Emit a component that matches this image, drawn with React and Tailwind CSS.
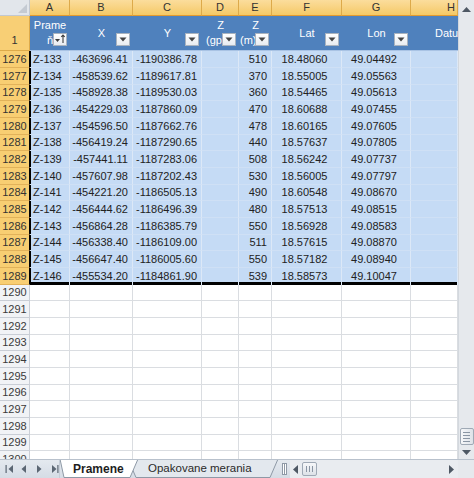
import React from 'react'

const cols = [
    { k: 'A', w: 'w-[40px]' },
    { k: 'B', w: 'w-[63px]' },
    { k: 'C', w: 'w-[69px]' },
    { k: 'D', w: 'w-[37px]' },
    { k: 'E', w: 'w-[33px]' },
    { k: 'F', w: 'w-[70px]' },
    { k: 'G', w: 'w-[69px]' },
    { k: 'H', w: 'w-[47px]' },
]

const rows = [
    ['Z-133', '-463696.41', '-1190386.78', '510', '18.48060', '49.04492'],
    ['Z-134', '-458539.62', '-1189617.81', '370', '18.55005', '49.05563'],
    ['Z-135', '-458928.38', '-1189530.03', '360', '18.54465', '49.05613'],
    ['Z-136', '-454229.03', '-1187860.09', '470', '18.60688', '49.07455'],
    ['Z-137', '-454596.50', '-1187662.76', '478', '18.60165', '49.07605'],
    ['Z-138', '-456419.24', '-1187290.65', '440', '18.57637', '49.07805'],
    ['Z-139', '-457441.11', '-1187283.06', '508', '18.56242', '49.07737'],
    ['Z-140', '-457607.98', '-1187202.43', '530', '18.56005', '49.07797'],
    ['Z-141', '-454221.20', '-1186505.13', '490', '18.60548', '49.08670'],
    ['Z-142', '-456444.62', '-1186496.39', '480', '18.57513', '49.08515'],
    ['Z-143', '-456864.28', '-1186385.79', '550', '18.56928', '49.08583'],
    ['Z-144', '-456338.40', '-1186109.00', '511', '18.57615', '49.08870'],
    ['Z-145', '-456647.40', '-1186005.60', '550', '18.57182', '49.08940'],
    ['Z-146', '-455534.20', '-1184861.90', '539', '18.58573', '49.10047'],
]

const heights = ['h-[17px]', 'h-[17px]', 'h-[16px]']

const FilterBtn = ({ sort }) => (
    <div className="absolute right-[3px] bottom-[4px] w-[14px] h-[13px] bg-linear-to-b from-white to-[#E8ECF1] border border-[#A9B3BF] flex items-center justify-center">
        {sort ? (
            <svg width="12" height="11" viewBox="0 0 12 11">
                <path d="M1 5h5l-2.5 3z" fill="#3C3C3C" />
                <path d="M9 1v8M7.3 2.8L9 1l1.7 1.8" stroke="#3C3C3C" strokeWidth="1.1" fill="none" />
            </svg>
        ) : (
            <svg width="8" height="5" viewBox="0 0 8 5">
                <path d="M0.5 0.5h7l-3.5 4z" fill="#444" />
            </svg>
        )}
    </div>
)

const Arrow = ({ dir, bar }) => {
    const d = {
        left: 'M6 1v8L1.5 5z',
        right: 'M2 1v8l4.5-4z',
    }[dir]
    return (
        <svg width="9" height="10" viewBox="0 0 9 10">
            {bar === 'left' && <rect x="0.5" y="1" width="1.2" height="8" fill="#5B6673" />}
            <path d={bar === 'left' ? 'M8 1v8L3.5 5z' : d} fill="#5B6673" />
            {bar === 'right' && <rect x="7.3" y="1" width="1.2" height="8" fill="#5B6673" />}
        </svg>
    )
}

export default function App() {
    return (
        <div className="w-[474px] h-[478px] overflow-hidden bg-white font-['Liberation_Sans',Arial,sans-serif] text-[11px] text-[#222]">
            <div className="flex h-[459px]">
                {/* sheet */}
                <div className="w-[458px] h-full overflow-hidden flex flex-col">
                    {/* column letters */}
                    <div className="flex h-[16px] shrink-0">
                        <div className="relative w-[30px] bg-[#E2E6EB] border-r border-b border-[#C2C8D0]">
                            <svg className="absolute right-[2px] bottom-[2px]" width="9" height="9" viewBox="0 0 9 9">
                                <path d="M9 0v9H0z" fill="#C4CAD2" />
                            </svg>
                        </div>
                        {cols.map((c) => (
                            <div key={c.k} className={`${c.w} shrink-0 flex items-center justify-center bg-linear-to-b from-[#FBDD9C] to-[#F5C965] border-r border-r-[#DDAA4A] border-b border-b-[#E39A2E] text-[#333] text-[11px]`}>
                                {c.k === 'H' ? <span className="ml-auto pr-[2px]">H</span> : c.k}
                            </div>
                        ))}
                    </div>

                    {/* table header row */}
                    <div className="flex h-[35px] shrink-0">
                        <div className="w-[30px] shrink-0 flex items-end justify-center pb-[2px] bg-[#F8CF75] border-r border-r-[#DDAA4A] border-b border-b-[#DDAA4A] text-[#333]">1</div>
                        <div className="w-[40px] shrink-0 relative overflow-hidden bg-[#4F81BD] border-b border-[#A9C3E4] text-white flex flex-col items-center justify-center leading-[15px]">
                            <span>Prame</span>
                            <span>ň</span>
                            <FilterBtn sort />
                        </div>
                        <div className="w-[63px] shrink-0 relative bg-[#4F81BD] border-b border-[#A9C3E4] text-white flex items-center justify-center">
                            X
                            <FilterBtn />
                        </div>
                        <div className="w-[69px] shrink-0 relative bg-[#4F81BD] border-b border-[#A9C3E4] text-white flex items-center justify-center">
                            Y
                            <FilterBtn />
                        </div>
                        <div className="w-[37px] shrink-0 relative overflow-hidden bg-[#4F81BD] border-b border-[#A9C3E4] text-white flex flex-col justify-center leading-[15px]">
                            <span className="text-center">Z</span>
                            <span className="pl-[4px] whitespace-nowrap">(gps)</span>
                            <FilterBtn />
                        </div>
                        <div className="w-[33px] shrink-0 relative overflow-hidden bg-[#4F81BD] border-b border-[#A9C3E4] text-white flex flex-col justify-center leading-[15px]">
                            <span className="text-center">Z</span>
                            <span className="pl-[1px] whitespace-nowrap">(m)</span>
                            <FilterBtn />
                        </div>
                        <div className="w-[70px] shrink-0 relative bg-[#4F81BD] border-b border-[#A9C3E4] text-white flex items-center justify-center">
                            Lat
                            <FilterBtn />
                        </div>
                        <div className="w-[69px] shrink-0 relative bg-[#4F81BD] border-b border-[#A9C3E4] text-white flex items-center justify-center">
                            Lon
                            <FilterBtn />
                        </div>
                        <div className="w-[47px] shrink-0 overflow-hidden bg-[#4F81BD] border-b border-[#A9C3E4] text-white flex items-center pl-[24px] whitespace-nowrap">
                            Datum
                        </div>
                    </div>

                    {/* selected data rows */}
                    {rows.map((r, i) => {
                        const last = i === rows.length - 1
                        const h = heights[i % 3]
                        const cell = last
                            ? 'bg-[#C5DBF5] border-r border-r-[#DCE8F7] shadow-[inset_0_-3px_0_#000]'
                            : 'bg-[#C5DBF5] border-r border-r-[#DCE8F7] border-b border-b-[#CFE0F5]'
                        const first = last
                            ? 'bg-[#C5DBF5] border-r border-r-[#DCE8F7] shadow-[inset_1px_0_0_#000,inset_0_-3px_0_#000]'
                            : 'bg-[#C5DBF5] border-r border-r-[#DCE8F7] border-b border-b-[#CFE0F5] shadow-[inset_1px_0_0_#000]'
                        return (
                            <div key={i} className={`flex shrink-0 ${h}`}>
                                <div className="w-[30px] shrink-0 flex items-center justify-center bg-[#F8CE72] border-r border-r-black border-b border-b-[#E2B25A] text-[#333]">{1276 + i}</div>
                                <div className={`w-[40px] shrink-0 flex items-center pl-[3px] ${first}`}>{r[0]}</div>
                                <div className={`w-[63px] shrink-0 flex items-center justify-end pr-[4px] ${cell}`}>{r[1]}</div>
                                <div className={`w-[69px] shrink-0 flex items-center justify-end pr-[4px] ${cell}`}>{r[2]}</div>
                                <div className={`w-[37px] shrink-0 ${cell}`}></div>
                                <div className={`w-[33px] shrink-0 flex items-center justify-end pr-[4px] ${cell}`}>{r[3]}</div>
                                <div className={`w-[70px] shrink-0 flex items-center justify-center pr-[4px] ${cell}`}>{r[4]}</div>
                                <div className={`w-[69px] shrink-0 flex items-center justify-center pr-[4px] ${cell}`}>{r[5]}</div>
                                <div className={`w-[47px] shrink-0 ${cell}`}></div>
                            </div>
                        )
                    })}

                    {/* empty rows */}
                    {Array.from({ length: 11 }).map((_, j) => (
                        <div key={j} className={`flex shrink-0 ${heights[(j + 14) % 3]}`}>
                            <div className="w-[30px] shrink-0 flex items-center justify-center bg-[#F1F3F6] border-r border-b border-[#C9CED6] text-[#3A3A3A]">{1290 + j}</div>
                            {cols.map((c) => (
                                <div key={c.k} className={`${c.w} shrink-0 border-r border-b border-[#DADDE1]`}></div>
                            ))}
                        </div>
                    ))}
                </div>

                {/* vertical scrollbar */}
                <div className="w-[16px] h-full bg-[#E6E9ED] border-l border-[#D3D8DE] flex flex-col items-center">
                    <div className="h-[18px] flex items-center justify-center">
                        <svg width="9" height="5" viewBox="0 0 9 5"><path d="M0 5L4.5 0 9 5z" fill="#4E5864" /></svg>
                    </div>
                    <div className="flex-1"></div>
                    <div className="w-[14px] h-[17px] rounded-[2px] border border-[#9FA9B5] bg-linear-to-r from-[#F6F7F9] to-[#DDE2E8] flex flex-col items-center justify-center gap-[2px]">
                        <div className="w-[7px] h-px bg-[#8A95A3]"></div>
                        <div className="w-[7px] h-px bg-[#8A95A3]"></div>
                        <div className="w-[7px] h-px bg-[#8A95A3]"></div>
                        <div className="w-[7px] h-px bg-[#8A95A3]"></div>
                    </div>
                    <div className="h-[14px] flex items-center justify-center">
                        <svg width="9" height="5" viewBox="0 0 9 5"><path d="M0 0L4.5 5 9 0z" fill="#4E5864" /></svg>
                    </div>
                </div>
            </div>

            {/* tab bar */}
            <div className="flex h-[19px] bg-linear-to-b from-[#E4E9EF] to-[#D5DCE5] border-t border-[#B8C1CC]">
                <div className="w-[60px] shrink-0 flex items-center gap-[6px] pl-[5px] border-r border-[#C6CED8]">
                    <Arrow dir="left" bar="left" />
                    <Arrow dir="left" />
                    <Arrow dir="right" />
                    <Arrow dir="right" bar="right" />
                </div>
                <div className="w-[218px] shrink-0 flex">
                    <div className="relative z-10 w-[78px] shrink-0 flex items-center pl-[13px] font-bold text-[12px] text-[#1E1E1E]">
                        <svg className="absolute inset-0" width="78" height="18" viewBox="0 0 78 18">
                            <path d="M0 -1 L78 -1 L70 17.5 L4 17.5 L0 -1z" fill="#fff" stroke="#8E99A6" strokeWidth="1" />
                        </svg>
                        <span className="relative">Pramene</span>
                    </div>
                    <div className="relative -ml-[10px] w-[150px] shrink-0 flex items-center pl-[20px] text-[11.5px] text-[#2A2A2A] whitespace-nowrap">
                        <svg className="absolute inset-0" width="150" height="18" viewBox="0 0 150 18">
                            <path d="M0 -1 L150 -1 L142 17.5 L8 17.5 z" fill="#E3E8EE" stroke="#8E99A6" strokeWidth="1" />
                        </svg>
                        <span className="relative">Opakovane merania</span>
                    </div>
                </div>
                <div className="w-[12px] shrink-0 flex items-center justify-center">
                    <div className="w-[5px] h-[12px] bg-white border border-[#8E99A6] flex justify-center">
                        <div className="w-px h-full bg-[#8E99A6]"></div>
                    </div>
                </div>
                <div className="w-[168px] shrink-0 flex items-center bg-[#E9ECF0]">
                    <div className="w-[10px] flex justify-center">
                        <svg width="5" height="9" viewBox="0 0 5 9"><path d="M5 0v9L0 4.5z" fill="#4E5864" /></svg>
                    </div>
                    <div className="ml-[2px] w-[15px] h-[14px] rounded-[2px] border border-[#9FA9B5] bg-linear-to-b from-[#F6F7F9] to-[#DDE2E8] flex items-center justify-center gap-[2px]">
                        <div className="w-px h-[6px] bg-[#8A95A3]"></div>
                        <div className="w-px h-[6px] bg-[#8A95A3]"></div>
                        <div className="w-px h-[6px] bg-[#8A95A3]"></div>
                    </div>
                    <div className="flex-1"></div>
                    <div className="w-[14px] flex justify-center">
                        <svg width="5" height="9" viewBox="0 0 5 9"><path d="M0 0v9L5 4.5z" fill="#4E5864" /></svg>
                    </div>
                </div>
                <div className="w-[16px] shrink-0 bg-[#E6E9ED]"></div>
            </div>
        </div>
    )
}
